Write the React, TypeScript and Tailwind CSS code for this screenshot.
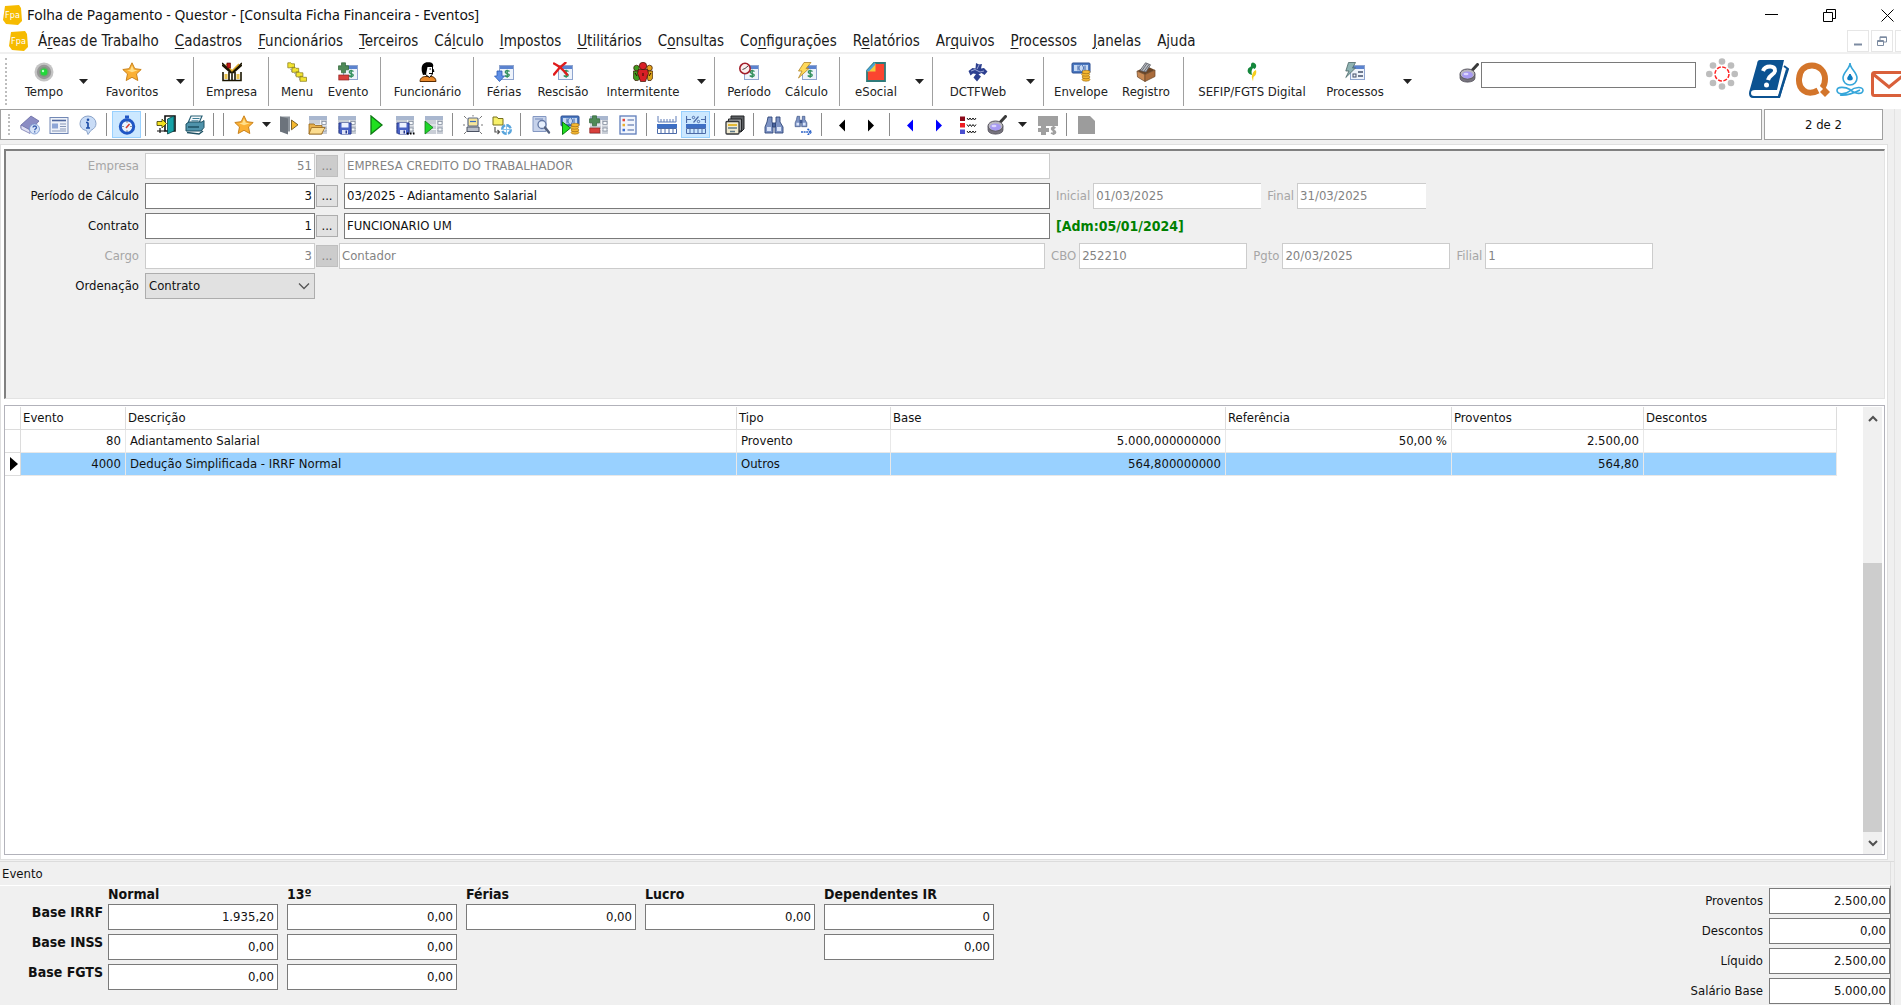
import { Fragment, type ReactNode } from "react";

/* ---------- icons ---------- */

function Svg({ children, className = "h-5 w-5" }: { children: ReactNode; className?: string }) {
  return (
    <svg viewBox="0 0 20 20" className={className} fill="none" aria-hidden="true">
      {children}
    </svg>
  );
}

const starPath = "M10 .8l2.8 5.9 6.4.8-4.7 4.4 1.3 6.6L10 15.3l-5.8 3.2 1.3-6.6L.8 7.5l6.4-.8z";

// small window with a blue title, base of most of the payroll icons
function Pane() {
  return (
    <>
      <rect x="5.5" y="3.5" width="14" height="14" fill="#eef3fb" stroke="#8fa5cf" />
      <rect x="6" y="4" width="13" height="3" fill="#5b83cf" />
    </>
  );
}

function MoneyPane() {
  return (
    <>
      <Pane />
      <path d="M15.5 9.5c-2-1.5-4.5-.8-4.2.8.3 1.6 4 1 4 2.8 0 1.6-3 2-4.6.4M13.2 7.8v8" stroke="#2f8f5b" strokeWidth="1.3" />
    </>
  );
}

function GridPane() {
  return (
    <>
      <rect x="1" y="1" width="18" height="18" fill="#c9ced6" />
      <rect x="1" y="1" width="18" height="4" fill="#a9b7cf" />
      <path d="M1 10h18M1 14.5h18M12.5 5v14" stroke="#f2f4f7" />
      <rect x="14" y="6.5" width="4" height="3" fill="#f8fafc" stroke="#7c8798" strokeWidth=".7" />
      <rect x="14" y="13" width="4" height="3" fill="#f8fafc" stroke="#7c8798" strokeWidth=".7" />
    </>
  );
}

function Floppy() {
  return (
    <>
      <path d="M2 8h12v11H3.5L2 17.5z" fill="#4a62c4" stroke="#27388c" />
      <rect x="4.5" y="8" width="7" height="4.5" fill="#eef1ff" />
      <rect x="5" y="15" width="6" height="4" fill="#dfe3f5" />
      <rect x="8.5" y="15.5" width="1.5" height="3" fill="#27388c" />
    </>
  );
}

function PlusMinus() {
  return (
    <>
      <path d="M3.5.8h4v3h3v4h-3v3h-4v-3h-3v-4h3z" fill="#4f8a57" stroke="#2f6438" strokeWidth=".7" />
      <rect x=".8" y="13" width="10" height="5" fill="#d9403c" stroke="#8f2320" strokeWidth=".7" />
    </>
  );
}

function Coins() {
  return (
    <g fill="#f4b731" stroke="#9b6a12" strokeWidth=".6">
      <ellipse cx="15" cy="17.5" rx="4" ry="1.7" />
      <ellipse cx="15" cy="15" rx="4" ry="1.7" />
      <ellipse cx="14.6" cy="12.5" rx="4" ry="1.7" />
      <ellipse cx="15.2" cy="10" rx="4" ry="1.7" />
    </g>
  );
}

function Banknote() {
  return (
    <>
      <rect x="1" y="1" width="18" height="10" rx="1" fill="#4a78c0" stroke="#2c4f92" />
      <rect x="3" y="3" width="14" height="6" fill="#c5d8f3" />
      <path d="M7 3.5v5M9.5 3c-2 2-2 4 0 6M11 3c2 2 2 4 0 6M14 3.5v5" stroke="#3a62a8" />
    </>
  );
}

function Star() {
  return (
    <Svg>
      <path d={starPath} fill="#fbb034" stroke="#c9821b" />
      <path d="M10 3.5l1.8 4.3 4 .5-5.8 2-5-2 3.3-.5z" fill="#ffdf8a" />
    </Svg>
  );
}

function Magnifier() {
  return (
    <Svg>
      <path d="M12.5 8L18.500 1.500" stroke="#3a3a3a" strokeWidth="3" strokeLinecap="round" />
      <path d="M1 11.500v3.500c0 5.500 15 5.500 15 0v-3.500z" fill="#77747e" stroke="#4a4852" strokeWidth=".7" />
      <ellipse cx="8.500" cy="11" rx="7.500" ry="5" fill="#b9b7bf" stroke="#55535d" />
      <ellipse cx="8.500" cy="12" rx="5.500" ry="3.500" fill="#a79af2" />
      <ellipse cx="7" cy="11" rx="2.500" ry="1.300" fill="#dcd6ff" />
    </Svg>
  );
}

function Binoculars() {
  return (
    <g fill="#7d93c4" stroke="#2f4678" strokeWidth=".9">
      <path d="M4 2h4v5l1 2v9H1v-6l2-5z" />
      <path d="M12 2h4v5l3 5v6h-8V9l1-2z" />
      <path d="M8.5 8h3v4h-3z" fill="#48629c" />
      <path d="M3 12h4v4H3zM13 12h4v4h-4z" fill="#dbe6fa" stroke="none" />
    </g>
  );
}

function Arrow({ flip = false, color }: { flip?: boolean; color: string }) {
  return (
    <Svg>
      <path d={flip ? "M13 4.5v12l-6-6z" : "M7 4.5v12l6-6z"} fill={color} />
    </Svg>
  );
}

function AppIcon() {
  return (
    <svg viewBox="0 0 19 20" className="h-5 w-[19px] shrink-0" aria-hidden="true">
      <path d="M2 1l14-1 2 3 1 13-4 4-12-1-3-4z" fill="#f6bb00" />
      <text x="9.5" y="13" textAnchor="middle" fontSize="9" fontFamily="DejaVu Sans Condensed" fill="#fff">
        Fpa
      </text>
    </svg>
  );
}

const icons: Record<string, ReactNode> = {
  tempo: (
    <Svg>
      <circle cx="10" cy="10" r="9.5" fill="#c4c4c4" />
      <circle cx="10" cy="10" r="7.2" fill="#969696" />
      <circle cx="10" cy="10" r="5" fill="#7a9a7a" />
      <circle cx="10" cy="10" r="3.500" fill="#22d83a" />
      <circle cx="9" cy="9" r="1.2" fill="#b9ffc2" />
    </Svg>
  ),
  star: <Star />,
  empresa: (
    <Svg>
      <path d="M0 1l10 9 10-9M0 3l9 8M20 3l-9 8" stroke="#1a1400" strokeWidth="1.5" />
      <path d="M4 2l6 7 7-7" stroke="#d9a520" strokeWidth="1.5" />
      <rect x="5" y="1" width="3.5" height="5" fill="#c01818" stroke="#400" strokeWidth=".6" />
      <path d="M1 10v8.5h6V10M13 10v8.5h6V10M1 18.5h18M10 10v8" stroke="#1a1400" strokeWidth="1.6" />
      <path d="M2.5 12h3v5h-3zM14.5 12h3v5h-3z" fill="#e8c14a" />
    </Svg>
  ),
  menu: (
    <Svg>
      <path d="M4 5v4h4M8 9v4h4M12 13v4h3" stroke="#777" strokeDasharray="1 1" />
      <g fill="#f3e42e" stroke="#8f8426" strokeWidth=".8">
        <path d="M.8.8h3l1 1h2.700v4H.8zM5 5.300h3l1 1h2.700v4H5zM9.200 9.800h3l1 1h2.700v4H9.200zM13 14.300h2.500l1 1h3v4H13z" />
      </g>
    </Svg>
  ),
  evento: (
    <Svg>
      <MoneyPane />
      <PlusMinus />
    </Svg>
  ),
  funcionario: (
    <Svg>
      <path d="M2 19.5c0-3 2-5 6-5h5c3 0 5 2 5 5z" fill="#e98a2c" stroke="#5b2c00" />
      <path d="M7 4h7.5v8l-3 3.5-4-3z" fill="#fff" stroke="#000" />
      <path d="M4 10C2.5 3 6-.2 10.5.3 15 .3 15.8 3 15 5H9.5L8 12.5 5 13z" fill="#000" />
      <path d="M11.5 7h1.5M11 11.5h3M15 7l1 2.5h-1" stroke="#000" />
    </Svg>
  ),
  ferias: (
    <Svg>
      <MoneyPane />
      <path d="M3 9h5v5h2.5L5.5 19.5.5 14H3z" fill="#5d8ee6" stroke="#2f5cb3" strokeWidth=".8" />
    </Svg>
  ),
  rescisao: (
    <Svg>
      <MoneyPane />
      <path d="M1 1.5c4 2 9 6 13 11M12.5.8C8 4 4 8 1 12.5" stroke="#e01b1b" strokeWidth="2.4" strokeLinecap="round" />
    </Svg>
  ),
  intermitente: (
    <Svg>
      <g stroke="#3a1400" strokeWidth=".7">
        <circle cx="3.5" cy="6" r="2.8" fill="#3f9b1f" />
        <path d="M.3 9h6.5v8l-2 1.5H2L.3 16z" fill="#3f9b1f" />
        <circle cx="16.5" cy="6" r="2.8" fill="#e3a11a" />
        <path d="M13.2 9h6.5v7L18 18.5h-3z" fill="#d9a31a" />
        <circle cx="10" cy="4" r="3.7" fill="#d81f26" />
        <path d="M5.500 7.500h9l1 4-1.500 3.500-1.500 4.500h-5L6 15l-1.500-3.500z" fill="#d81f26" />
      </g>
      <path d="M10 11v3M2 11l2 3M18 11l-2 3" stroke="#2b0a00" />
    </Svg>
  ),
  periodo: (
    <Svg>
      <MoneyPane />
      <circle cx="6" cy="6.5" r="5.2" fill="#fbeeee" stroke="#a3202c" strokeWidth="1.6" />
      <path d="M3.5 7.5L6 6.5l3-2.5" stroke="#444" />
    </Svg>
  ),
  calculo: (
    <Svg>
      <MoneyPane />
      <path d="M7 .5h7L9 6.5h3L1.5 16 5 9H1.5z" fill="#ffd95a" stroke="#b1842a" strokeWidth=".8" />
    </Svg>
  ),
  esocial: (
    <Svg>
      <path d="M8 1h11v18H1V8.500z" fill="#fb4530" stroke="#2f7a7a" strokeWidth="1.800" />
      <path d="M1 9.500L9.500 1v8.500z" fill="#f5c93b" />
      <path d="M0 9L9 0v3L3 9.500z" fill="#4aa3d8" />
    </Svg>
  ),
  dctf: (
    <Svg>
      <path d="M8 1l3 1.500L14 2l-1 4.500 3-.5 3.500 3.500-3 3.500-3-2-3 1.500 2.500 2L9 19.500l-3.500-4L8 12l-3-.5-2.500 2L.5 9l4-3 3 .5z" fill="#2c3f8f" />
      <path d="M3 9l4-1.500L12 10l4-1M11 3L9 7" stroke="#a9b3de" strokeWidth=".9" />
    </Svg>
  ),
  envelope: (
    <Svg>
      <Banknote />
      <Coins />
    </Svg>
  ),
  registro: (
    <Svg>
      <path d="M1 9l8 3.5V19.5L1.5 15z" fill="#c88a55" stroke="#6a4526" strokeWidth=".7" />
      <path d="M9 12.5L19 8v6.5l-10 5z" fill="#a96c3c" stroke="#6a4526" strokeWidth=".7" />
      <path d="M1 9l9.5-5L19 8 9 12.5z" fill="#6a4526" />
      <path d="M4 8.5L9.5.8l5 2L10 10z" fill="#b9bcc2" stroke="#55585f" strokeWidth=".8" />
      <path d="M6 8.5l5-7M8 9.5l5-7" stroke="#6b6e75" />
    </Svg>
  ),
  sefip: (
    <Svg>
      <path d="M11 .5c4 1 4 5 1.5 6.5L11 6C9 8 9.5 11 10 13c-4-1-5-3.5-4-6 .8-2 3-1.5 3-3.5S9.5.5 11 .5z" fill="#14873c" />
      <path d="M14 8c1 4-1 6-2.5 7L11 19.5 9.8 15c.3-3 1.5-6 4.2-7z" fill="#f5cf1c" />
    </Svg>
  ),
  processos: (
    <Svg>
      <Pane />
      <path d="M13 10h5M13 14h5" stroke="#44516b" strokeWidth="1.5" />
      <rect x="8" y="12" width="3" height="3" stroke="#44516b" />
      <path d="M3.5.5h7L7.5 6h3L.8 15.5 4 9H.8z" fill="#8fb3b3" stroke="#4a6666" strokeWidth=".8" />
    </Svg>
  ),
  search: <Magnifier />,
  book: (
    <Svg>
      <path d="M1 10L11 1l8 5-9 10-9-3z" fill="#8b8dc4" stroke="#5d5f9a" strokeWidth=".7" />
      <path d="M1 10v4l9 4.5V15z" fill="#dfe0f3" stroke="#6668a3" strokeWidth=".7" />
      <circle cx="14.5" cy="14" r="5" fill="#d7e4f8" stroke="#6f8fcb" strokeWidth=".8" />
      <path d="M13 12.5c0-2 3.5-2 3.5 0 0 1.2-1.8 1.3-1.8 2.7M14.7 16.3v1.2" stroke="#3c5fae" strokeWidth="1.3" />
    </Svg>
  ),
  news: (
    <Svg>
      <rect x="1" y="2.5" width="18" height="16" fill="#eef2f9" stroke="#7288b5" />
      <path d="M3 5.5h14" stroke="#4d659c" strokeWidth="1.6" />
      <rect x="3" y="8.5" width="6" height="5" fill="#8ea6d6" />
      <path d="M11 9h6M11 11.5h6M11 14h6M3 16h14" stroke="#8797b8" />
    </Svg>
  ),
  info: (
    <Svg>
      <path d="M10 1a8 7.5 0 018 7.5c0 3-2 5.5-5 6.8L10 19.5l-1.5-4C4.5 15 2 12 2 8.5A8 7.5 0 0110 1z" fill="#c9dcf6" stroke="#8ba3c9" />
      <path d="M10 7.5v5.5M8 7.5h2M8 13h4" stroke="#1f4fa8" strokeWidth="1.7" />
      <circle cx="10" cy="4.8" r="1.3" fill="#1f4fa8" />
    </Svg>
  ),
  clock: (
    <Svg>
      <path d="M8 .5h4v3H8z" fill="#2257c4" />
      <circle cx="10" cy="11.5" r="6.7" fill="#eaf3ff" stroke="#1f56c5" strokeWidth="3" />
      <path d="M9 13l3.5-4" stroke="#d23b2e" strokeWidth="1.5" />
      <path d="M10 6.5v1M10 15.5v1M5.5 11.5h1M13.5 11.5h1" stroke="#333" />
    </Svg>
  ),
  exit: (
    <Svg>
      <path d="M9 1h10v15H9z" fill="#fff" stroke="#111" strokeWidth="1.6" />
      <path d="M11.5 4L18 1v15l-6.5 3z" fill="#17a3a8" stroke="#063f42" strokeWidth=".8" />
      <path d="M1 6.5h5V4l4.5 4.500L6 13v-2.5H1z" fill="#f2e11f" stroke="#3d3900" strokeWidth=".8" />
      <path d="M1 16h8M4 13v5" stroke="#111" strokeWidth="1.2" />
    </Svg>
  ),
  printer: (
    <Svg>
      <path d="M6 1h11l-3 7H3z" fill="#f4f8fb" stroke="#2b6277" strokeWidth="1.2" />
      <path d="M7.5 3.5h7M6.5 5.8h7" stroke="#3f7f97" />
      <path d="M1 9l3-2h13l2-1.5v7L16 16H1z" fill="#4f93ab" stroke="#1d5063" />
      <path d="M3 12h11M2 17.5l12 1.5 4-3" stroke="#1d5063" strokeWidth="1.5" />
    </Svg>
  ),
  door: (
    <Svg>
      <path d="M1 1.5h10v15H1z" fill="#8d949c" />
      <path d="M1 1.5l8 2v16l-8-3z" fill="#6c737c" />
      <path d="M12.500 5l6.500 4.800-6.500 5z" fill="#f5b82e" stroke="#5c4512" strokeWidth=".8" />
    </Svg>
  ),
  folder: (
    <Svg>
      <GridPane />
      <path d="M1 9h5l1.5 1.5H14V19H1z" fill="#e8b04a" stroke="#94651a" strokeWidth=".8" />
      <path d="M3.5 12.5H17L13.5 19H1z" fill="#fbdc8f" stroke="#94651a" strokeWidth=".8" />
    </Svg>
  ),
  save: (
    <Svg>
      <GridPane />
      <Floppy />
    </Svg>
  ),
  play: (
    <Svg>
      <path d="M5 1v18l11-9z" fill="#1fe01f" stroke="#0c7a12" strokeWidth="1.3" />
    </Svg>
  ),
  saveAs: (
    <Svg>
      <GridPane />
      <Floppy />
      <path d="M12 18.5h1.5M15 18.5h1.5M18 18.5h1.5" stroke="#000" strokeWidth="1.8" />
    </Svg>
  ),
  gridPlay: (
    <Svg>
      <GridPane />
      <path d="M1 6v13l8-6.5z" fill="#1fd62a" stroke="#0c7a12" strokeWidth=".8" />
    </Svg>
  ),
  box: (
    <Svg>
      <path d="M1 1l2.500 2.500M19 1l-2.500 2.500M0 10h2M18 10h2M1 19l2.500-2.500M19 19l-2.500-2.500M10 0v1.500" stroke="#777" />
      <rect x="5" y="3" width="10" height="8" rx="1" fill="#f6e59a" stroke="#5d6b86" strokeWidth="1.2" />
      <path d="M7 6.5h6" stroke="#3b6fc0" strokeWidth="1.2" />
      <path d="M4 12h12v4.5H4z" fill="#b9bec9" stroke="#4a5263" />
    </Svg>
  ),
  folderMove: (
    <Svg>
      <path d="M1 2h4l1 1.5h5V10H1z" fill="#f7f06a" stroke="#77701c" />
      <path d="M3 12v5h4M5.5 15l2 2-2 2" stroke="#555" strokeWidth="1.2" />
      <circle cx="14.5" cy="14.5" r="4.3" stroke="#5aa5dc" strokeWidth="2.4" strokeDasharray="5 1.7" />
      <path d="M14.5 9v11M9 14.5h11" stroke="#8cc5ec" />
    </Svg>
  ),
  preview: (
    <Svg>
      <path d="M2 1.5h13v15H2z" fill="#c6d2ea" stroke="#8498c2" />
      <path d="M4 4h8" stroke="#7188ba" />
      <circle cx="11" cy="9.5" r="4" fill="#e7f0fd" stroke="#6478a4" strokeWidth="1.3" />
      <path d="M14 12.5l4 5" stroke="#55627f" strokeWidth="2.4" strokeLinecap="round" />
    </Svg>
  ),
  moneyPlay: (
    <Svg>
      <Banknote />
      <Coins />
      <path d="M2.5 7v12.5l8-6.5z" fill="#1fe01f" stroke="#0c7a12" />
    </Svg>
  ),
  plusMinus: (
    <Svg>
      <GridPane />
      <PlusMinus />
    </Svg>
  ),
  list: (
    <Svg>
      <rect x="2" y="1" width="16" height="18" fill="#f2f6fd" stroke="#5f7dbb" strokeWidth="1.3" />
      <path d="M9.5 5H16M9.5 10H16M9.5 15H16" stroke="#7f93bd" strokeWidth="1.3" />
      <path d="M4.5 3.8h2.5v2.5H4.5z" fill="#e0453a" />
      <path d="M4.5 8.8h2.5v2.5H4.5z" fill="#eab12f" />
      <path d="M4.5 13.8h2.5v2.5H4.5z" fill="#3f6fd0" />
    </Svg>
  ),
  ruler: (
    <Svg>
      <path d="M1 1v6h18V1M4 4v3M7 4v3M10 4v3M13 4v3M16 4v3" stroke="#5e7db8" />
      <rect x="0" y="9" width="20" height="4" fill="#3e6fc4" />
      <path d="M.5 13.5h19v5H.5zM4 13.5v5M8 13.5v5M12 13.5v5M16 13.5v5" stroke="#4c6ba8" />
    </Svg>
  ),
  rulerPct: (
    <Svg>
      <path d="M.5 1v7M19.5 1v7M.5 4.5H5M15 4.5h4.5M7.5 7.5l5-6" stroke="#4c6ba8" strokeWidth="1.2" />
      <circle cx="7.5" cy="2.5" r="1.2" stroke="#4c6ba8" />
      <circle cx="12.5" cy="6.5" r="1.2" stroke="#4c6ba8" />
      <rect x="0" y="9" width="20" height="4" fill="#3e6fc4" />
      <path d="M.5 13.5h19v5H.5zM4 13.5v5M8 13.5v5M12 13.5v5M16 13.5v5" stroke="#4c6ba8" />
    </Svg>
  ),
  cards: (
    <Svg>
      <path d="M6 1h13v13l-3 3H6z" fill="#5c5f63" stroke="#232527" />
      <path d="M3.5 4h13v12h-13z" fill="#9a9da1" stroke="#232527" />
      <rect x="1" y="6.5" width="13" height="12.5" rx="1" fill="#f0ead0" stroke="#34373a" strokeWidth="1.3" />
      <path d="M3 10h9" stroke="#e3b934" strokeWidth="2" />
      <path d="M3 13h9M5 16.5h5" stroke="#5e7b8c" strokeWidth="1.4" />
    </Svg>
  ),
  find: (
    <Svg>
      <Binoculars />
    </Svg>
  ),
  findNext: (
    <Svg>
      <svg x="1" y="0" width="14" height="13" viewBox="0 0 20 20">
        <Binoculars />
      </svg>
      <path d="M8 17h9M14.5 14l4 3-4 3" stroke="#2b62c8" strokeWidth="1.6" strokeDasharray="2 .6" />
    </Svg>
  ),
  prev: <Arrow flip color="#000" />,
  next: <Arrow color="#000" />,
  prevBlue: <Arrow flip color="#0000ff" />,
  nextBlue: <Arrow color="#0000ff" />,
  legend: (
    <Svg>
      <rect x="2" y="1.5" width="5" height="4.5" fill="#8b0a1a" />
      <rect x="2" y="8" width="5" height="4.5" fill="#ee1c24" />
      <rect x="2" y="14.5" width="5" height="4.5" fill="#4a4fcf" />
      <path d="M9 3l1.5 2L12 3l1.5 2L15 3l1.5 2L18 3M9 9.5l1.5 2 1.5-2 1.5 2 1.5-2 1.5 2 1.5-2M9 16l1.5 2 1.5-2 1.5 2 1.5-2 1.5 2L18 16" stroke="#111" />
    </Svg>
  ),
  moneyOff: (
    <Svg>
      <path d="M0 1h20v10H0zM3 11h5v2h3v4H8v3H3v-3H0v-4h3z" fill="#a0a0a0" />
      <path d="M17.5 13c-2.500-1.500-4.500 0-3.500 1.500 1.2 1 3.500 1 3.500 2.700 0 1.600-2.500 1.800-4.500.8M15.5 11v9" stroke="#a0a0a0" strokeWidth="1.8" />
    </Svg>
  ),
  docOff: (
    <Svg>
      <path d="M1 1h12l5 5v13H1z" fill="#9c9c9c" />
    </Svg>
  ),
};

/* ---------- data ---------- */

// [before, access key, after]
const menus = [
  ["Á", "r", "eas de Trabalho"],
  ["", "C", "adastros"],
  ["", "F", "uncionários"],
  ["", "T", "erceiros"],
  ["Cá", "l", "culo"],
  ["", "I", "mpostos"],
  ["", "U", "tilitários"],
  ["C", "o", "nsultas"],
  ["Co", "n", "figurações"],
  ["R", "e", "latórios"],
  ["Ar", "q", "uivos"],
  ["", "P", "rocessos"],
  ["", "J", "anelas"],
  ["A", "j", "uda"],
];

type Tool = { label: string; icon: string; width: string; drop?: boolean };

const toolGroups: Tool[][] = [
  [
    { label: "Tempo", icon: "tempo", width: "w-[54px]", drop: true },
    { label: "Favoritos", icon: "star", width: "w-[72px]", drop: true },
  ],
  [{ label: "Empresa", icon: "empresa", width: "w-[65px]" }],
  [
    { label: "Menu", icon: "menu", width: "w-[46px]" },
    { label: "Evento", icon: "evento", width: "w-[56px]" },
  ],
  [{ label: "Funcionário", icon: "funcionario", width: "w-[83px]" }],
  [
    { label: "Férias", icon: "ferias", width: "w-[50px]" },
    { label: "Rescisão", icon: "rescisao", width: "w-[68px]" },
    { label: "Intermitente", icon: "intermitente", width: "w-[92px]", drop: true },
  ],
  [
    { label: "Período", icon: "periodo", width: "w-[58px]" },
    { label: "Cálculo", icon: "calculo", width: "w-[57px]" },
  ],
  [{ label: "eSocial", icon: "esocial", width: "w-[62px]", drop: true }],
  [{ label: "DCTFWeb", icon: "dctf", width: "w-[80px]", drop: true }],
  [
    { label: "Envelope", icon: "envelope", width: "w-16" },
    { label: "Registro", icon: "registro", width: "w-[66px]" },
  ],
  [
    { label: "SEFIP/FGTS Digital", icon: "sefip", width: "w-[126px]" },
    { label: "Processos", icon: "processos", width: "w-20", drop: true },
  ],
];

// "|" is a separator, "v" a drop-down arrow, "V" a wide one
const actions = [
  "book", "news", "info", "|", "clock", "|", "exit", "printer", "|", "|",
  "star", "v", "door", "folder", "save", "play", "saveAs", "gridPlay", "|",
  "box", "folderMove", "|", "preview", "moneyPlay", "plusMinus", "list", "|",
  "ruler", "rulerPct", "|", "cards", "|", "find", "findNext", "|",
  "prev", "next", "|", "prevBlue", "nextBlue", "legend", "search", "V", "moneyOff", "|", "docOff",
];
const pressed = ["clock", "rulerPct"];

const rows = [
  { evento: "80", descricao: "Adiantamento Salarial", tipo: "Provento", base: "5.000,000000000", referencia: "50,00 %", proventos: "2.500,00" },
  { evento: "4000", descricao: "Dedução Simplificada - IRRF Normal", tipo: "Outros", base: "564,800000000", referencia: "", proventos: "564,80" },
];

const baseHeads = ["Normal", "13º", "Férias", "Lucro", "Dependentes IR"];
const bases = [
  { label: "Base IRRF", values: ["1.935,20", "0,00", "0,00", "0,00", "0"] },
  { label: "Base INSS", values: ["0,00", "0,00", null, null, "0,00"] },
  { label: "Base FGTS", values: ["0,00", "0,00", null, null, null] },
];

const totals = [
  ["Proventos", "2.500,00"],
  ["Descontos", "0,00"],
  ["Líquido", "2.500,00"],
  ["Salário Base", "5.000,00"],
];

/* ---------- parts ---------- */

function Caret() {
  return (
    <svg viewBox="0 0 9 5" className="h-[5px] w-[9px]" aria-hidden="true">
      <path d="M0 0h9L4.5 5z" fill="#222" />
    </svg>
  );
}

function Grip() {
  return <span className="my-1 w-0 border-l-2 border-dotted border-[#bdbdbd]" />;
}

function TitleBar() {
  return (
    <header className="flex h-[30px] items-center pl-[3px] pr-[7px]">
      <AppIcon />
      <h1 className="ml-[5px] flex-1 font-['Noto_Sans',sans-serif] text-[14px] leading-5">
        Folha de Pagamento - Questor - [Consulta Ficha Financeira - Eventos]
      </h1>
      <div className="flex gap-[45px]">
        <button aria-label="Minimizar">
          <svg viewBox="0 0 13 13" className="size-[13px]" stroke="#000">
            <path d="M0 5.5h13" />
          </svg>
        </button>
        <button aria-label="Restaurar">
          <svg viewBox="0 0 13 13" className="size-[13px]" stroke="#000" fill="none">
            <path d="M.5 3.5h9v9h-9zM3.5 3V.5h9v9H10" />
          </svg>
        </button>
        <button aria-label="Fechar">
          <svg viewBox="0 0 13 13" className="size-[13px]" stroke="#000">
            <path d="M.5.5l12 12M12.5.5l-12 12" />
          </svg>
        </button>
      </div>
    </header>
  );
}

function MenuBar() {
  return (
    <nav className="flex h-6 items-center overflow-hidden border-b-2 border-[#f0f0f0] pl-[9px]">
      <AppIcon />
      <div className="ml-[10px] flex flex-1 gap-4 whitespace-nowrap text-[15px] leading-5 text-[#1a1a1a]">
        {menus.map(([before, key, after]) => (
          <button key={before + key + after}>
            {before}
            <u className="underline-offset-2">{key}</u>
            {after}
          </button>
        ))}
      </div>
      <div className="-mr-4 flex gap-[2px]">
        <button aria-label="Minimizar janela" className="flex h-[22px] w-[22px] items-center justify-center border border-[#e6e6e6]">
          <svg viewBox="0 0 10 10" className="size-[10px]">
            <path d="M1 8.5h8" stroke="#7c8ba1" strokeWidth="2" />
          </svg>
        </button>
        <button aria-label="Restaurar janela" className="flex h-[22px] w-[22px] items-center justify-center border border-[#e6e6e6]">
          <svg viewBox="0 0 10 10" className="size-[10px]" fill="none" stroke="#7c8ba1">
            <path d="M.5 4.5h6v5h-6zM.5 5.5h6M3 4V.8h6.5V6H7M3 1.5h6" />
          </svg>
        </button>
        <button aria-label="Fechar janela" className="h-[22px] w-[22px] border border-[#e6e6e6]" />
      </div>
    </nav>
  );
}

function MainToolbar() {
  return (
    <div className="flex h-[55px] overflow-hidden pl-[5px]">
      <Grip />
      <div className="ml-[10px] flex shrink-0">
        {toolGroups.map((group, i) => (
          <Fragment key={i}>
            {i > 0 && <span className="mr-[5px] mt-[3px] h-[49px] w-px bg-[#a0a0a0]" />}
            <div className={group[group.length - 1].drop ? "flex" : "flex pr-1"}>
              {group.map((tool) => (
                <Fragment key={tool.label}>
                  <button className={`${tool.width} flex flex-col items-center whitespace-nowrap pt-2 text-[13px] leading-5 text-[#222]`}>
                    {icons[tool.icon]}
                    {tool.label}
                  </button>
                  {tool.drop && (
                    <button aria-label={`Mais opções de ${tool.label}`} className="flex w-[25px] items-center justify-center">
                      <Caret />
                    </button>
                  )}
                </Fragment>
              ))}
            </div>
          </Fragment>
        ))}
      </div>
      <div className="-mr-[6px] ml-auto flex shrink-0 items-start pt-[6px]">
        <span className="pt-[3px]">{icons.search}</span>
        <input aria-label="Pesquisar" className="ml-[2px] mt-[2px] h-[26px] w-[215px] border border-[#7a7a7a] px-1 outline-none" />
        <svg viewBox="0 0 32 32" className="ml-[10px] mt-[-2px] size-8" aria-hidden="true">
          <g fill="#bdbdbd">
            <circle cx="16" cy="3.5" r="3.3" />
            <circle cx="25" cy="7.5" r="3.3" />
            <circle cx="28.7" cy="16" r="3.3" />
            <circle cx="25" cy="25" r="3.3" />
            <circle cx="16" cy="28.5" r="3.3" />
            <circle cx="7" cy="25" r="3.3" />
            <circle cx="3.3" cy="16" r="3.3" />
            <circle cx="7" cy="7.5" r="3.3" />
          </g>
          <circle cx="16" cy="16" r="7" fill="#fff" stroke="#f22" strokeWidth="1.5" strokeDasharray="4 1.5" />
        </svg>
        <a href="#ajuda" aria-label="Ajuda" className="ml-[11px]">
          <svg viewBox="0 0 40 38" className="h-[38px] w-10">
            <path d="M11 0h24l-7 30H6C3 30 2 31 2 33s1 3 3 3h24l8-27 2 1-8 28H4c-4 0-5-4-3-9L8 4c.5-3 1-4 3-4z" fill="#0b5291" />
            <path d="M35 6l4 3-9 28" stroke="#0b5291" strokeWidth="2" fill="none" />
            <path d="M14 11c2-6 13-6 12 0-.7 4-6 4-7 9" stroke="#fff" strokeWidth="4" fill="none" />
            <circle cx="17.5" cy="25" r="2.5" fill="#fff" />
          </svg>
        </a>
        <a href="#questor" aria-label="Questor" className="ml-[6px] mt-[2px]">
          <svg viewBox="0 0 36 36" className="size-9">
            <path d="M23 28.5C11 35 3.5 26 4 17 4.5 8 10 3.5 17 3.5S30 9 30 17c0 4-1 7-3 9" stroke="#d3752b" strokeWidth="6" fill="none" />
            <path d="M30 25l5 5-5 5-5-5z" fill="#d3752b" />
          </svg>
        </a>
        <a href="#zen" aria-label="Zen" className="ml-[4px] mt-[2px]">
          <svg viewBox="0 0 30 34" className="h-[34px] w-[30px]" fill="none" stroke="#35a6da" strokeWidth="1.600">
            <path d="M15 1c0 6-7 9-7 15 0 4 3 7 7 7s7-3 7-7c0-6-7-9-7-15z" />
            <path d="M15 12c0 2-2 3-2 4.500s4 1.500 4 0-2-2.500-2-4.500z" fill="#0d7bc0" stroke="#0d7bc0" />
            <path d="M15 27.500c-5-3-13-3-13 .8 0 4.500 8 4.500 13 .5 5-4 13-4.500 13-.5 0 4.500-8 4-13-.8zM5 33c7 1 14-2 20-5" />
          </svg>
        </a>
        <a href="#mensagens" aria-label="Mensagens" className="ml-[6px] mt-[11px]">
          <svg viewBox="0 0 36 26" className="h-[26px] w-9" fill="none" stroke="#d9603b" strokeWidth="3">
            <rect x="1.5" y="1.5" width="33" height="23" rx="2" />
            <path d="M2 3l16 13L34 3" />
          </svg>
        </a>
      </div>
    </div>
  );
}

function ActionBar() {
  return (
    <div className="flex h-[31px] gap-[2px] pr-[11px]">
      <div className="flex flex-1 items-stretch border border-[#a0a0a0] bg-white pl-[7px]">
        <Grip />
        <span className="w-[5px]" />
        {actions.map((name, i) => {
          if (name === "|") return <span key={i} className="mx-[4px] my-[3px] w-[2px] border-l border-[#8c8c8c]" />;
          if (name === "v" || name === "V")
            return (
              <button key={i} aria-label="Mais opções" className={`flex items-center justify-center ${name === "v" ? "w-4" : "w-[22px]"}`}>
                <Caret />
              </button>
            );
          return (
            <button
              key={i}
              aria-label={name}
              className={`flex w-[29px] items-center justify-center ${pressed.includes(name) ? "my-px border border-[#99d1ff] bg-[#cce8ff]" : ""}`}
            >
              {icons[name]}
            </button>
          );
        })}
      </div>
      <div className="flex w-[119px] items-center justify-center border border-[#a0a0a0] bg-white text-[13px]">2 de 2</div>
    </div>
  );
}

const fieldBox = "h-[26px] border bg-white px-[2px] pb-[2px] text-[13px] outline-none disabled:border-[#cccccc] disabled:text-[#838383]";

function LookupRow({ id, label, code, text, off = false, tight = false, children }: {
  id: string;
  label: string;
  code: string;
  text: string;
  off?: boolean;
  tight?: boolean;
  children?: ReactNode;
}) {
  return (
    <div className="flex h-[26px] items-center">
      <label htmlFor={id} className={`w-[139px] pr-[6px] text-right ${off ? "text-[#a6a6a6]" : ""}`}>
        {label}
      </label>
      <input id={id} disabled={off} defaultValue={code} className={`${fieldBox} w-[170px] border-[#7a7a7a] text-right`} />
      <button
        disabled={off}
        aria-label={`Localizar ${label}`}
        className="ml-px h-[22px] w-[22px] border border-[#adadad] bg-[#e1e1e1] leading-4 disabled:border-[#bfbfbf] disabled:bg-[#cccccc] disabled:text-[#838383]"
      >
        ...
      </button>
      <input
        aria-label={`Descrição de ${label}`}
        disabled={off}
        defaultValue={text}
        className={`${fieldBox} w-[706px] border-[#7a7a7a] ${tight ? "ml-px" : "ml-[6px]"}`}
      />
      {children}
    </div>
  );
}

function SmallField({ id, label, value, width = "w-[168px]", open = false }: {
  id: string;
  label: string;
  value: string;
  width?: string;
  open?: boolean;
}) {
  return (
    <>
      <label htmlFor={id} className="pl-[6px] pr-[3px] text-[#a6a6a6]">
        {label}
      </label>
      <input id={id} disabled defaultValue={value} className={`${fieldBox} ${width} ${open ? "border-r-0" : ""}`} />
    </>
  );
}

function FilterForm() {
  return (
    <form className="flex h-[250px] flex-col gap-1 border-b border-l-2 border-r border-t-2 border-b-[#e3e3e3] border-l-[#808080] border-r-[#e3e3e3] border-t-[#808080] bg-[#f0f0f0] pt-[2px] text-[13px]">
      <LookupRow id="empresa" label="Empresa" code="51" text="EMPRESA CREDITO DO TRABALHADOR" off />
      <LookupRow id="periodo" label="Período de Cálculo" code="3" text="03/2025 - Adiantamento Salarial">
        <SmallField id="inicial" label="Inicial" value="01/03/2025" open />
        <SmallField id="final" label="Final" value="31/03/2025" width="w-[129px]" open />
      </LookupRow>
      <LookupRow id="contrato" label="Contrato" code="1" text="FUNCIONARIO UM">
        <strong className="pl-[6px] text-[14px] text-[#008000]">[Adm:05/01/2024]</strong>
      </LookupRow>
      <LookupRow id="cargo" label="Cargo" code="3" text="Contador" off tight>
        <SmallField id="cbo" label="CBO" value="252210" />
        <SmallField id="pgto" label="Pgto" value="20/03/2025" />
        <SmallField id="filial" label="Filial" value="1" />
      </LookupRow>
      <div className="flex h-[26px] items-center">
        <label htmlFor="ordenacao" className="w-[139px] pr-[6px] text-right">
          Ordenação
        </label>
        <div className="relative">
          <select id="ordenacao" className="h-[26px] w-[170px] appearance-none border border-[#adadad] bg-[#e1e1e1] px-[3px] text-[13px] outline-none">
            <option>Contrato</option>
          </select>
          <svg viewBox="0 0 12 7" className="pointer-events-none absolute right-[5px] top-[10px] h-[7px] w-3" fill="none" stroke="#555" strokeWidth="1.3">
            <path d="M1 .5l5 5 5-5" />
          </svg>
        </div>
      </div>
    </form>
  );
}

function ScrollBar() {
  return (
    <div className="flex w-[19px] flex-col items-center bg-[#f0f0f0]">
      <button aria-label="Rolar para cima" className="flex h-[22px] w-full items-center justify-center">
        <svg viewBox="0 0 10 7" className="h-[7px] w-[10px]" fill="none" stroke="#505050" strokeWidth="2">
          <path d="M1 6l4-4 4 4" />
        </svg>
      </button>
      <div className="flex w-full flex-1 flex-col">
        <span className="flex-[134]" />
        <span className="flex-[269] bg-[#cdcdcd]" />
      </div>
      <button aria-label="Rolar para baixo" className="flex h-[22px] w-full items-center justify-center">
        <svg viewBox="0 0 10 7" className="h-[7px] w-[10px]" fill="none" stroke="#505050" strokeWidth="2">
          <path d="M1 1l4 4 4-4" />
        </svg>
      </button>
    </div>
  );
}

function EventTable() {
  const head = "border-b border-r border-[#dcdcdc] pl-[2px] text-left font-normal";
  const cell = "border-b border-r border-[#e8e8e8] px-[4px]";
  return (
    <div className="mt-[6px] flex flex-1 border border-[#b2b2ba] bg-white pr-[2px] pt-px text-[13px]">
      <div className="flex-1 pr-[26px]">
        <table className="w-full table-fixed border-separate border-spacing-0 leading-5">
          <colgroup>
            <col className="w-4" />
            <col className="w-[105px]" />
            <col />
            <col className="w-[154px]" />
            <col className="w-[335px]" />
            <col className="w-[226px]" />
            <col className="w-[192px]" />
            <col className="w-[193px]" />
          </colgroup>
          <thead>
            <tr className="h-[23px]">
              <td className="border-b border-r border-[#dcdcdc]" />
              <th className={head}>Evento</th>
              <th className={head}>Descrição</th>
              <th className={head}>Tipo</th>
              <th className={head}>Base</th>
              <th className={head}>Referência</th>
              <th className={head}>Proventos</th>
              <th className={head}>Descontos</th>
            </tr>
          </thead>
          <tbody>
            {rows.map((row, i) => {
              const selected = i === 1;
              return (
                <tr key={row.evento} className={selected ? "h-[23px] bg-[#99d1ff]" : "h-[23px]"}>
                  <td className="border-b border-r border-[#dcdcdc] bg-white">
                    {selected && (
                      <svg viewBox="0 0 8 14" className="ml-[5px] h-[14px] w-2" aria-hidden="true">
                        <path d="M0 0l8 7-8 7z" fill="#000" />
                      </svg>
                    )}
                  </td>
                  <td className={`${cell} text-right`}>{row.evento}</td>
                  <td className={cell}>{row.descricao}</td>
                  <td className={cell}>{row.tipo}</td>
                  <td className={`${cell} text-right`}>{row.base}</td>
                  <td className={`${cell} text-right`}>{row.referencia}</td>
                  <td className={`${cell} text-right`}>{row.proventos}</td>
                  <td className={cell} />
                </tr>
              );
            })}
          </tbody>
        </table>
      </div>
      <ScrollBar />
    </div>
  );
}

function Summary() {
  return (
    <section>
      <h2 className="h-[23px] border-r border-[#e0e0e0] pl-[2px] text-[13px] leading-6">Evento</h2>
      <div className="flex h-[120px] justify-between border-r border-t border-r-[#8a8a8a] border-t-white">
        <div className="grid grid-cols-[99px_repeat(5,170px)] grid-rows-[14px_26px_26px_26px] gap-x-[9px] gap-y-1 text-[14px] font-bold leading-4">
          <span />
          {baseHeads.map((h) => (
            <span key={h}>{h}</span>
          ))}
          {bases.map((base) => (
            <Fragment key={base.label}>
              <span className="-mr-1 text-right">{base.label}</span>
              {base.values.map((value, c) =>
                value === null ? (
                  <span key={c} />
                ) : (
                  <input
                    key={c}
                    aria-label={`${base.label} ${baseHeads[c]}`}
                    defaultValue={value}
                    className="h-[26px] w-full border border-[#7a7a7a] bg-white pb-px pl-[3px] pr-[3px] text-right text-[13px] font-normal outline-none"
                  />
                )
              )}
            </Fragment>
          ))}
        </div>
        <div className="flex flex-col gap-1 pt-[2px] text-[13px]">
          {totals.map(([label, value]) => (
            <div key={label} className="flex items-center justify-end">
              <label htmlFor={label} className="pr-[6px]">
                {label}
              </label>
              <input id={label} defaultValue={value} className="h-[26px] w-[121px] border border-[#7a7a7a] bg-white pb-px pl-[3px] pr-[3px] text-right text-[13px] outline-none" />
            </div>
          ))}
        </div>
      </div>
    </section>
  );
}

export default function App() {
  return (
    <div className="flex min-h-screen flex-col overflow-hidden bg-white font-['DejaVu_Sans_Condensed','DejaVu_Sans',sans-serif] text-[#111]">
      <TitleBar />
      <MenuBar />
      <MainToolbar />
      <main className="flex flex-1 bg-[#f0f0f0]">
        <div className="flex min-w-0 flex-1 flex-col">
          <ActionBar />
          <div className="mr-[6px] mt-1 flex flex-1 flex-col border border-[#e0e0e0] bg-white py-1 pl-[3px] pr-[2px]">
            <FilterForm />
            <EventTable />
          </div>
          <div className="mt-px border-t border-[#dcdcdc] pr-[3px]">
            <Summary />
          </div>
        </div>
        <div className="w-[7px] border-l border-[#e3e3e3]" />
      </main>
    </div>
  );
}
